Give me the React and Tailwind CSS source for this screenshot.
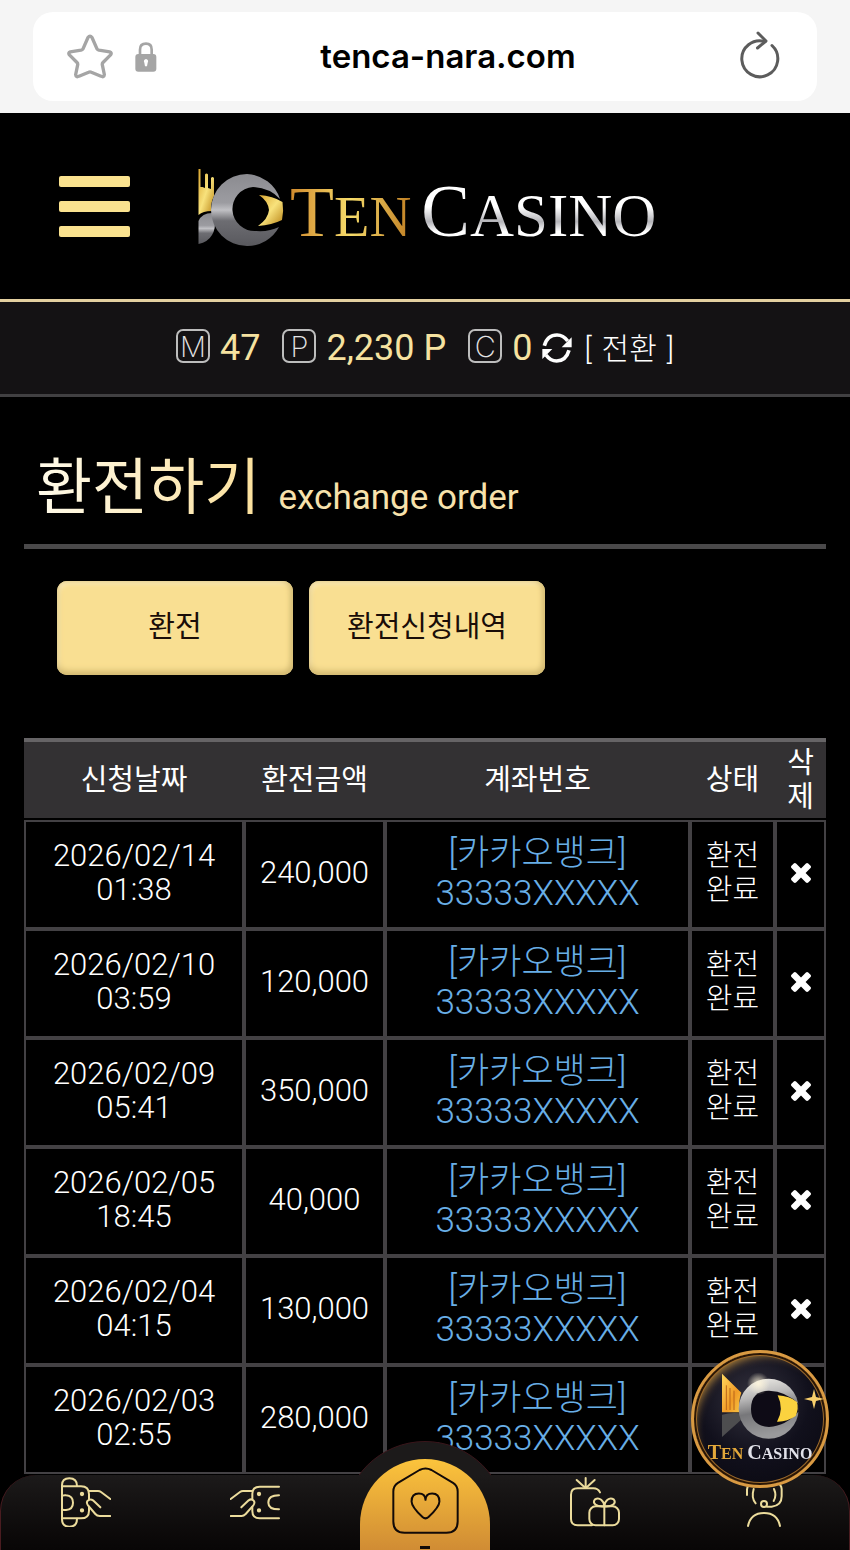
import React from "react";

const rows = [
  { date: "2026/02/14", time: "01:38", amount: "240,000", status: ["환전", "완료"] },
  { date: "2026/02/10", time: "03:59", amount: "120,000", status: ["환전", "완료"] },
  { date: "2026/02/09", time: "05:41", amount: "350,000", status: ["환전", "완료"] },
  { date: "2026/02/05", time: "18:45", amount: "40,000", status: ["환전", "완료"] },
  { date: "2026/02/04", time: "04:15", amount: "130,000", status: ["환전", "완료"] },
  { date: "2026/02/03", time: "02:55", amount: "280,000", status: null },
];

function LogoMark({ className }) {
  return (
    <svg viewBox="0 0 86 78" className={className} aria-hidden="true">
      <defs>
        <linearGradient id="mark-silver" x1="0" y1="0" x2="0" y2="1">
          <stop offset="0" stopColor="#8b8b90" />
          <stop offset="0.4" stopColor="#9c9ca1" />
          <stop offset="0.5" stopColor="#c0c0c4" />
          <stop offset="0.65" stopColor="#6d6d72" />
          <stop offset="1" stopColor="#59595e" />
        </linearGradient>
        <linearGradient id="mark-gold" x1="0" y1="0" x2="1" y2="1">
          <stop offset="0" stopColor="#d9a52e" />
          <stop offset="0.5" stopColor="#f8e27c" />
          <stop offset="1" stopColor="#b98416" />
        </linearGradient>
      </defs>
      <path
        d="M0.500 1H2.500V19H4.500L7 20V6.500Q8.500 4.500 10 6.500V20L13 21V10Q14.500 8 16 10V28Q12 36 13.500 43Q5 43 0.500 47Z"
        fill="url(#mark-gold)"
      />
      <path d="M0.500 76V53Q4 45 14 45Q15 50 16.500 54Q18 60 14 67Q10 74 0.500 76Z" fill="url(#mark-silver)" />
      <path
        fillRule="evenodd"
        d="M49 6A36 36 0 0 1 82 31Q72 20 55 19A22 22 0 1 0 58 63Q71 64 81 59A36 36 0 0 1 49 78A36 36 0 1 1 49 6Z"
        fill="url(#mark-silver)"
      />
      <path d="M61 27Q75 28 84.500 34Q86 43 84 52Q74 57 60 58Q70 51 71 42Q70 33 61 27Z" fill="url(#mark-gold)" />
    </svg>
  );
}

function BadgeMark() {
  return (
    <svg viewBox="94 100 234 204" className="h-[68px] w-[78px]" aria-hidden="true">
      <defs>
        <linearGradient id="badge-ring" x1="0" y1="0" x2="0.2" y2="1">
          <stop offset="0" stopColor="#f4f2ec" />
          <stop offset="0.35" stopColor="#b9b8b8" />
          <stop offset="0.6" stopColor="#77777a" />
          <stop offset="1" stopColor="#9a9a9c" />
        </linearGradient>
        <linearGradient id="badge-gold" x1="0" y1="0" x2="1" y2="1">
          <stop offset="0" stopColor="#ffd85e" />
          <stop offset="0.6" stopColor="#f19b26" />
          <stop offset="1" stopColor="#f7c745" />
        </linearGradient>
        <radialGradient id="badge-glow">
          <stop offset="0" stopColor="#fff6dc" stopOpacity="0.9" />
          <stop offset="1" stopColor="#fff6dc" stopOpacity="0" />
        </radialGradient>
      </defs>
      <path d="M97 105L155 162Q144 190 152 221H97Z" fill="url(#badge-gold)" />
      <path d="M110 140V214M121 148V214M133 156V214" stroke="#b8651a" strokeWidth="3" />
      <path d="M97 228Q125 220 152 224L158 240L97 295Z" fill="#4d4d4f" />
      <circle cx="237" cy="210" r="90" fill="url(#badge-ring)" />
      <path d="M184 211Q184 156 238 156Q290 158 327 196V218Q290 262 238 265Q184 262 184 211Z" fill="#0e0b16" />
      <path d="M264 170Q300 172 322 190Q328 208 318 232Q292 250 262 249Q284 212 264 170Z" fill="#fbd23f" />
      <circle cx="206" cy="135" r="34" fill="url(#badge-glow)" />
    </svg>
  );
}

function StarIcon() {
  return (
    <svg viewBox="50 42 138 134" className="h-[45px] w-[46px]" fill="none" stroke="#a5a5a5" strokeWidth="10" strokeLinejoin="round" aria-hidden="true">
      <path d="M113 52Q119 44 125 52L140 86Q142 89 146 90L178 95Q186 98 180 105L158 127Q155 130 156 134L162 163Q161 173 152 168L123 156Q119 154 115 156L86 168Q77 173 76 163L82 134Q83 130 80 127L58 105Q52 98 60 95L92 90Q96 89 98 86Z" />
    </svg>
  );
}

function LockIcon() {
  return (
    <svg viewBox="257 65 66 90" className="h-[30px] w-[22px]" aria-hidden="true">
      <path d="M272 104V88Q272 70 290 70Q307 70 307 88V104" fill="none" stroke="#a5a5a5" strokeWidth="8" />
      <rect x="258" y="101" width="63" height="53" rx="9" fill="#a5a5a5" />
      <path d="M290 116A7 7 0 0 1 295 127L293 138H287L285 127A7 7 0 0 1 290 116Z" fill="#fff" />
    </svg>
  );
}

function ReloadIcon() {
  return (
    <svg viewBox="0 0 42 48" className="h-12 w-[42px]" fill="none" stroke="#5c5c5c" strokeWidth="3" strokeLinecap="round" strokeLinejoin="round" aria-hidden="true">
      <path d="M33 14.500A18 18 0 1 1 26 10.500" />
      <path d="M19 2L27 10L18.500 17" />
    </svg>
  );
}

function SyncIcon() {
  return (
    <svg viewBox="68 46 90 90" className="h-[30px] w-[30px]" fill="none" aria-hidden="true">
      <path d="M75 84Q84 52 113 52Q132 52 145 70M149 98Q140 130 112 130Q93 130 80 112" stroke="#fff" strokeWidth="11" />
      <path d="M157 59V89H127ZM69 124V94H99Z" fill="#fff" />
    </svg>
  );
}

function CrossIcon() {
  return (
    <svg viewBox="110 366 1188 1188" className="h-5 w-5" fill="#fff" aria-hidden="true">
      <path d="M1298 1322q0 40-28 68l-136 136q-28 28-68 28t-68-28l-294-294-294 294q-28 28-68 28t-68-28l-136-136q-28-28-28-68t28-68l294-294-294-294q-28-28-28-68t28-68l136-136q28-28 68-28t68 28l294 294 294-294q28-28 68-28t68 28l136 136q28 28 28 68t-28 68l-294 294 294 294q28 28 28 68z" />
    </svg>
  );
}

const lineIcon = {
  fill: "none",
  stroke: "#ecdc9c",
  strokeWidth: 6,
  strokeLinecap: "round",
  strokeLinejoin: "round",
  "aria-hidden": true,
};

function DepositIcon() {
  return (
    <svg viewBox="180 111 150 150" className="h-[50px] w-[50px]" {...lineIcon}>
      <path d="M183 138V136Q183 115 205 115Q228 115 228 138M183 236V238Q183 260 205 260Q228 260 228 236M183 134V240" />
      <path d="M183 139H240Q264 139 264 163V178M264 200V212Q264 235 240 235H183" />
      <path d="M185 167Q190 165 195 166Q216 168 216 188Q216 208 195 210Q190 211 185 209" />
      <circle cx="243" cy="162" r="3.500" fill="#ecdc9c" />
      <circle cx="243" cy="211" r="3.500" fill="#ecdc9c" />
      <path d="M264 153H291Q296 153 300 156L328 177M298 202L276 181Q268 175 260 182Q255 188 261 196L283 222Q288 228 296 228H328" />
    </svg>
  );
}

function WithdrawIcon() {
  return (
    <svg viewBox="690 111 150 150" className="h-[50px] w-[50px]" {...lineIcon}>
      <path d="M837 140H779Q757 140 757 161V178M757 200V213Q757 235 779 235H837" />
      <path d="M837 166Q805 166 805 188Q805 208 837 208" />
      <circle cx="777" cy="162" r="3.500" fill="#ecdc9c" />
      <circle cx="777" cy="211" r="3.500" fill="#ecdc9c" />
      <path d="M757 153H729Q724 153 720 156L692 177M724 202L746 181Q754 175 761 182Q766 188 760 196L737 222Q731 228 725 228H692" />
    </svg>
  );
}

function HomeIcon() {
  return (
    <svg viewBox="184 142 202 202" className="h-[67px] w-[67px]" fill="none" stroke="#120a08" strokeWidth="6" strokeLinejoin="round" aria-hidden="true">
      <path d="M267 151Q285 142 303 151L368 190Q382 199 382 216V306Q382 340 348 340H222Q188 340 188 306V216Q188 199 202 190Z" />
      <path d="M285 241Q284 222 265 222Q243 222 243 246Q243 262 276 293Q285 301 294 293Q327 262 327 246Q327 222 305 222Q286 222 285 241Z" />
    </svg>
  );
}

function GiftIcon() {
  return (
    <svg viewBox="720 174 150 150" className="h-[50px] w-[50px]" {...lineIcon}>
      <path d="M786 319H743Q723 319 723 300V227Q723 208 743 208H790Q804 208 810 220" />
      <path d="M740 183L763 204M767 177V204M794 183L771 204" />
      <rect x="778" y="262" width="89" height="57" rx="19" />
      <path d="M823 262V319M823 262C798 264 786 252 795 241C808 233 822 245 823 262C824 245 838 233 851 241C860 252 848 264 823 262" />
    </svg>
  );
}

function SupportIcon() {
  return (
    <svg viewBox="240 442 150 150" className="h-[50px] w-[50px]" {...lineIcon}>
      <path d="M267 589Q275 550 315 550Q355 550 363 589" />
      <circle cx="315" cy="523" r="9" />
      <path d="M324 531H338Q368 528 368 500V478Q366 452 315 452Q266 452 264 480V496" />
      <path d="M284 478Q276 505 290 521M345 478Q354 498 344 514" />
    </svg>
  );
}

function Balance({ mark, value }) {
  return (
    <span className="flex items-center gap-2.5">
      <span className="mb-1 flex h-[34px] w-[34px] items-center justify-center rounded-[7px] border-2 border-[#bdbdbd] font-['Inter'] text-[29px] leading-none font-extralight text-[#e4e4e4]">
        {mark}
      </span>
      <span className="text-[36px] leading-[44px] text-[#f6e2a0]">{value}</span>
    </span>
  );
}

function TabButton({ children }) {
  return (
    <button
      type="button"
      className="h-[94px] w-[236px] rounded-[10px] bg-[#f9df92] text-[29px] text-[#1a0d08] shadow-[inset_0_-4px_6px_#d3ba72,inset_-3px_0_5px_#dcc47c,inset_2px_3px_4px_#fbecc0]"
    >
      {children}
    </button>
  );
}

function NavLink({ label, children }) {
  return (
    <a href="#" aria-label={label} className="flex justify-center pt-0.5">
      {children}
    </a>
  );
}

const cell = "border-2 border-[#434144] p-0 pb-1 text-center align-middle";
const head = "border-t-4 border-[#666466] bg-[#333133] p-0 text-center align-middle font-normal";

export default function App() {
  return (
    <div className="min-h-screen bg-black font-['Roboto','Noto_Sans_CJK_KR',sans-serif] text-white">
      <div className="bg-[#f5f5f5] px-[33px] py-3">
        <div className="flex h-[89px] items-center rounded-[20px] bg-white pr-9 pl-[34px]">
          <button type="button" aria-label="즐겨찾기">
            <StarIcon />
          </button>
          <span className="ml-[22px]">
            <LockIcon />
          </span>
          <span className="flex-1 text-center font-['Inter',sans-serif] text-[33px] font-semibold text-black">tenca-nara.com</span>
          <button type="button" aria-label="새로고침" className="pb-1">
            <ReloadIcon />
          </button>
        </div>
      </div>

      <header className="flex h-[189px] items-center border-b-[3px] border-[#e3d0a0] px-[59px]">
        <button type="button" aria-label="메뉴" className="flex w-[71px] flex-col gap-3.5">
          <span className="h-[11px] rounded-[2px] bg-[#fae28f]" />
          <span className="h-[11px] rounded-[2px] bg-[#fae28f]" />
          <span className="h-[11px] rounded-[2px] bg-[#fae28f]" />
        </button>
        <a href="#" className="ml-[68px] flex items-center pt-0.5 font-['Liberation_Serif',serif] leading-[80px]">
          <LogoMark className="h-[78px] w-[86px]" />
          <span className="ml-1.5 bg-gradient-to-r from-[#d08a2c] via-[#f6dc6a] to-[#c07f22] bg-clip-text pt-3.5 text-[58px] text-transparent">
            <span className="text-[72px]">T</span>EN
          </span>
          <span className="ml-2.5 bg-gradient-to-b from-white from-50% via-[#b4b4b9] via-65% to-white to-75% bg-clip-text pt-3.5 text-[61px] text-transparent">
            <span className="text-[73px]">C</span>ASINO
          </span>
        </a>
      </header>

      <div className="flex h-[95px] items-center justify-center border-b-[3px] border-[#414042] bg-[#141214]">
        <div className="flex items-center gap-[22px]">
          <Balance mark="M" value="47" />
          <Balance mark="P" value="2,230 P" />
          <Balance mark="C" value="0" />
        </div>
        <a href="#" className="ml-2.5 flex items-center gap-3 text-[30px] font-light">
          <SyncIcon />
          <span className="flex gap-2.5">
            <span>[</span>
            <span>전환</span>
            <span>]</span>
          </span>
        </a>
      </div>

      <main className="px-6 pt-[47px]">
        <h1 className="flex items-baseline gap-[18px] border-b-[5px] border-[#4a494a] px-3 pb-0.5 leading-[88px] font-normal">
          <span className="bg-gradient-to-r from-[#fffbea] to-[#fbe09b] bg-clip-text text-[61px] text-transparent">환전하기</span>
          <span className="text-[35px] text-[#f7e2ac]">exchange order</span>
        </h1>

        <div className="flex gap-4 px-[33px] pt-8">
          <TabButton>환전</TabButton>
          <TabButton>환전신청내역</TabButton>
        </div>

        <table className="mt-[63px] w-full table-fixed border-separate border-spacing-0">
          <colgroup>
            <col className="w-[220px]" />
            <col className="w-[141px]" />
            <col />
            <col className="w-[85px]" />
            <col className="w-[51px]" />
          </colgroup>
          <thead className="text-[29px] leading-[34px]">
            <tr className="h-20">
              <th className={head}>신청날짜</th>
              <th className={head}>환전금액</th>
              <th className={head}>계좌번호</th>
              <th className={head}>상태</th>
              <th className={head}>
                삭<br />제
              </th>
            </tr>
          </thead>
          <tbody className="text-[31px] leading-[34px] font-light">
            <tr aria-hidden="true">
              <td colSpan={5} className="h-0.5 p-0" />
            </tr>
            {rows.map((row) => (
              <tr key={row.date} className="h-[109px]">
                <td className={cell}>
                  {row.date}
                  <br />
                  {row.time}
                </td>
                <td className={cell}>{row.amount}</td>
                <td className={cell}>
                  <div className="pt-0.5 text-[35px] leading-10 text-[#68aee6]">
                    [카카오뱅크]
                    <br />
                    33333XXXXX
                  </div>
                </td>
                <td className={cell}>
                  {row.status && (
                    <div className="text-[29px]">
                      {row.status[0]}
                      <br />
                      {row.status[1]}
                    </div>
                  )}
                </td>
                <td className={cell}>
                  <button type="button" aria-label="삭제" className="block w-full">
                    <span className="flex justify-center">
                      <CrossIcon />
                    </span>
                  </button>
                </td>
              </tr>
            ))}
          </tbody>
        </table>
      </main>

      <nav className="fixed inset-x-0 bottom-0 h-[75px]">
        <div className="absolute -top-[34px] left-1/2 h-[109px] w-[164px] -translate-x-1/2 overflow-hidden">
          <div className="h-[164px] w-[164px] rounded-full border border-[#3a161b] bg-[#1c1a1a]" />
        </div>
        <div className="relative grid h-full grid-cols-5 rounded-t-[36px] border-x border-[#4a1c20] bg-gradient-to-b from-[#1c1a1a] to-[#080606]">
          <NavLink label="입금">
            <DepositIcon />
          </NavLink>
          <NavLink label="출금">
            <WithdrawIcon />
          </NavLink>
          <div />
          <NavLink label="이벤트">
            <GiftIcon />
          </NavLink>
          <NavLink label="고객센터">
            <SupportIcon />
          </NavLink>
        </div>
        <a
          href="#"
          aria-label="홈"
          className="absolute bottom-0 left-1/2 flex h-[91px] w-[130px] -translate-x-1/2 flex-col items-center overflow-hidden rounded-t-[65px] bg-gradient-to-b from-[#fcc43c] to-[#d08c34] pt-2"
        >
          <HomeIcon />
          <span className="mt-3 h-[3px] w-2.5 shrink-0 bg-[#120a08]" />
        </a>
      </nav>

      <a
        href="#"
        className="fixed right-[21px] bottom-[62px] flex h-[138px] w-[138px] flex-col items-center rounded-full border-[3px] border-[#d99a42] bg-[radial-gradient(circle_at_45%_35%,#34323e_0%,#11101c_50%,#08070e_100%)] pt-[19px] shadow-[inset_0_0_0_2px_#2a1605,inset_0_0_0_3px_#9c6a2c,inset_8px_10px_10px_-8px_#b98a3c]"
      >
        <BadgeMark />
        <span className="flex items-baseline gap-1 font-['Liberation_Serif',serif] text-[16px] leading-6 font-bold whitespace-nowrap">
          <span className="text-[#e3a83a]">
            <span className="text-[20px]">T</span>EN
          </span>
          <span className="text-[#e2e2ea]">
            <span className="text-[20px]">C</span>ASINO
          </span>
        </span>
        <svg viewBox="0 0 20 20" className="absolute top-9 right-0.5 h-5 w-5" fill="#f8cf6c" aria-hidden="true">
          <path d="M10 0L12 8L20 10L12 12L10 20L8 12L0 10L8 8Z" />
        </svg>
      </a>
    </div>
  );
}
